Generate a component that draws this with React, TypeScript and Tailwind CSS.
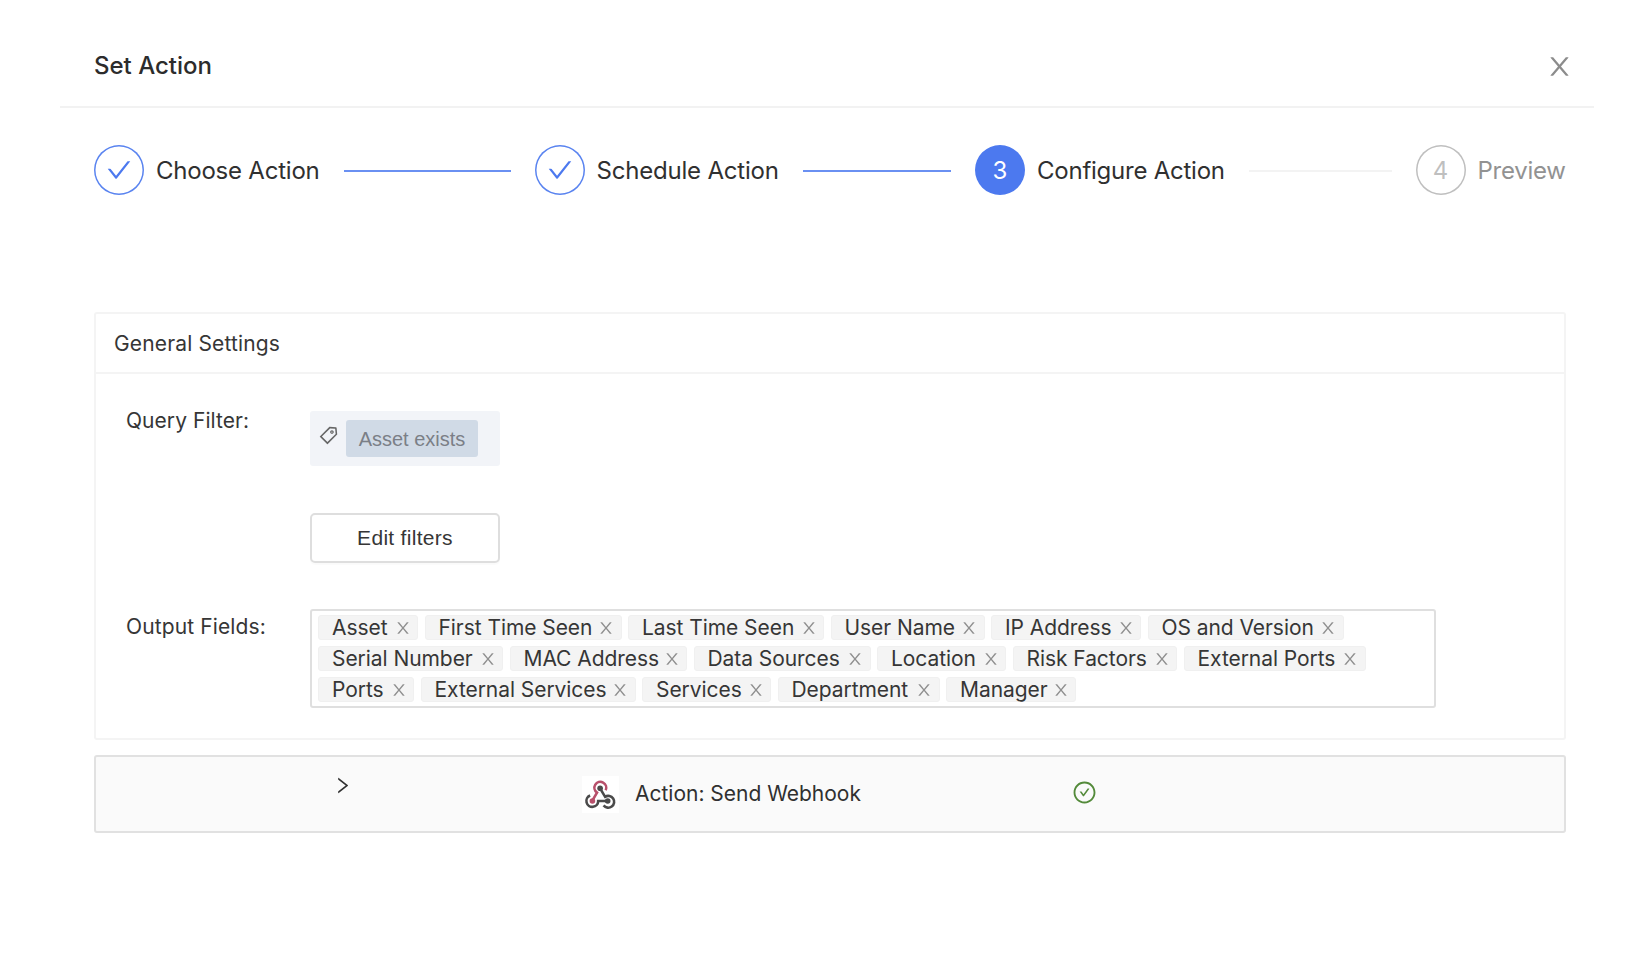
import { AiOutlineCheck, AiOutlineCheckCircle, AiOutlineTag } from "react-icons/ai";

type Step = {
  title: string;
  state: "done" | "active" | "waiting";
  width: string;
  tracking: string;
};

const steps: Step[] = [
  { title: "Choose Action", state: "done", width: "w-[440.5px]", tracking: "tracking-[-0.22px]" },
  { title: "Schedule Action", state: "done", width: "w-[440.5px]", tracking: "tracking-[-0.2px]" },
  { title: "Configure Action", state: "active", width: "w-[440.5px]", tracking: "tracking-[-0.24px]" },
  { title: "Preview", state: "waiting", width: "w-[152px]", tracking: "tracking-[-0.25px]" },
];

type Field = { name: string; width: string };

const fieldRows: Field[][] = [
  [
    { name: "Asset", width: "w-[100px]" },
    { name: "First Time Seen", width: "w-[197px]" },
    { name: "Last Time Seen", width: "w-[196px]" },
    { name: "User Name", width: "w-[154px]" },
    { name: "IP Address", width: "w-[150px]" },
    { name: "OS and Version", width: "w-[196px]" },
  ],
  [
    { name: "Serial Number", width: "w-[185px]" },
    { name: "MAC Address", width: "w-[177.5px]" },
    { name: "Data Sources", width: "w-[177px]" },
    { name: "Location", width: "w-[129px]" },
    { name: "Risk Factors", width: "w-[164.5px]" },
    { name: "External Ports", width: "w-[182px]" },
  ],
  [
    { name: "Ports", width: "w-[96px]" },
    { name: "External Services", width: "w-[215px]" },
    { name: "Services", width: "w-[129px]" },
    { name: "Department", width: "w-[162px]" },
    { name: "Manager", width: "w-[130px]" },
  ],
];

function CloseIcon({ className }: { className: string }) {
  return (
    <svg viewBox="0 0 1024 1024" fill="currentColor" className={className}>
      <path d="M563.8 512l262.5-312.9c4.4-5.2.7-13.1-6.1-13.1h-79.8c-4.7 0-9.2 2.1-12.3 5.7L511.6 449.8 295.1 191.7c-3-3.6-7.5-5.7-12.3-5.7H203c-6.8 0-10.5 7.9-6.1 13.1L459.4 512 196.9 824.9A7.95 7.95 0 0 0 203 838h79.8c4.7 0 9.2-2.1 12.3-5.7l216.5-258.1 216.5 258.1c3 3.6 7.5 5.7 12.3 5.7h79.8c6.8 0 10.5-7.9 6.1-13.1L563.8 512z" />
    </svg>
  );
}

function ChevronRightIcon({ className }: { className: string }) {
  return (
    <svg viewBox="0 0 1024 1024" fill="currentColor" className={className}>
      <path d="M765.7 486.8L314.9 134.7A7.97 7.97 0 0 0 302 141v77.3c0 4.9 2.3 9.6 6.1 12.6l360 281.1-360 281.1c-3.9 3-6.1 7.7-6.1 12.6V883c0 6.7 7.7 10.4 12.9 6.3l450.8-352.1a31.96 31.96 0 0 0 0-50.4z" />
    </svg>
  );
}

function WebhookLogo() {
  return (
    <svg viewBox="0 0 37 37" className="size-[37px] shrink-0 bg-white" fill="none" strokeWidth="2.6">
      <path d="M23.7 14.2A5.9 5.9 0 1 0 15 16.6L10.5 24.3" stroke="#b8506b" />
      <path d="M18.1 12.3 23.1 20.8A5.9 5.9 0 1 1 21.6 29.4" stroke="#4a4a4a" />
      <path d="M25.7 25H16.2A5.9 5.9 0 1 1 8.1 19.5" stroke="#4a4a4a" />
      <circle cx="18.1" cy="12.3" r="2.8" fill="#4a4a4a" />
      <circle cx="10.4" cy="25" r="2.8" fill="#b8506b" />
      <circle cx="25.7" cy="25" r="2.8" fill="#4a4a4a" />
    </svg>
  );
}

function StepMarker({ state, index }: { state: Step["state"]; index: number }) {
  if (state === "done") {
    return (
      <span className="flex size-[50px] shrink-0 items-center justify-center rounded-full text-[#4c79ef] shadow-[inset_0_0_0_1.5px_#5a84f0]">
        <AiOutlineCheck size={28} />
      </span>
    );
  }
  if (state === "active") {
    return (
      <span className="flex size-[50px] shrink-0 items-center justify-center rounded-full bg-[#4c79ef] pt-0.5 text-2xl text-white">
        {index}
      </span>
    );
  }
  return (
    <span className="flex size-[50px] shrink-0 items-center justify-center rounded-full pt-0.5 text-2xl text-[#bfbfbf] shadow-[inset_0_0_0_1.5px_#bfbfbf]">
      {index}
    </span>
  );
}

function Steps() {
  return (
    <ol className="flex pt-[37px] pl-[34px]">
      {steps.map((step, i) => (
        <li key={step.title} className={`flex shrink-0 items-center ${step.width}`}>
          <StepMarker state={step.state} index={i + 1} />
          <span
            className={`ml-3 pt-0.5 text-2xl leading-[48px] whitespace-nowrap ${step.tracking} ${
              step.state === "waiting" ? "text-[#929292]" : "text-[#303030]"
            }`}
          >
            {step.title}
          </span>
          {i < steps.length - 1 && (
            <span
              className={`mt-px mr-6 ml-6 h-0.5 flex-1 ${
                step.state === "done" ? "bg-[#6a90f2]" : "bg-[#f3f3f3]"
              }`}
            />
          )}
        </li>
      ))}
    </ol>
  );
}

function GeneralSettings() {
  return (
    <section className="mt-[117px] h-[428px] rounded-[3px] border-2 border-[#f4f4f4] text-[21px] text-[#363636]">
      <h2 className="h-[60px] border-b-2 border-[#f4f4f4] pl-[18px] leading-[60px] tracking-[0.15px]">
        General Settings
      </h2>
      <div className="grid grid-cols-[184px_1fr] pt-[37px] pl-[30px]">
        <span className="h-8 leading-[20px] tracking-[0.05px]">Query Filter:</span>
        <div className="flex h-[55px] w-[190px] items-start rounded-[3px] bg-[#f2f4f8] pt-[9px] pl-2 font-['Liberation_Sans',sans-serif] text-xl text-[#7b7f87]">
          <AiOutlineTag size={21} className="mt-[5px] text-[#666]" />
          <span className="ml-[7px] flex h-[37px] w-[132px] items-center justify-center rounded-[3px] bg-[#d0dae6] pt-px">
            Asset exists
          </span>
        </div>
        <button className="col-start-2 mt-[47px] h-[50px] w-[190px] rounded-[5px] border-2 border-[#dedede] bg-white font-['Liberation_Sans',sans-serif] tracking-[0.3px] shadow-[0_2px_1px_#00000005]">
          Edit filters
        </button>
        <span className="mt-[46px] leading-[35px] tracking-[0.12px]">Output Fields:</span>
        <div className="mt-[46px] flex h-[99px] w-[1126px] flex-col gap-1.5 rounded-[3px] border-2 border-[#dfdfdf] pt-1 pl-[6px]">
          {fieldRows.map((row) => (
            <div key={row[0].name} className="flex gap-[6.5px]">
              {row.map((field) => (
                <span
                  key={field.name}
                  className={`flex h-[25px] shrink-0 items-center justify-between rounded-[3px] border border-[#f0f0f0] bg-[#f4f4f4] pr-[5.5px] pl-[13px] leading-[25px] tracking-[-0.06px] whitespace-nowrap ${field.width}`}
                >
                  {field.name}
                  <CloseIcon className="mt-px size-[18px] shrink-0 text-[#8f8f8f]" />
                </span>
              ))}
            </div>
          ))}
        </div>
      </div>
    </section>
  );
}

function ActionRow() {
  return (
    <section className="mt-[15px] flex h-[78px] items-center rounded-[3px] border-2 border-[#e1e1e1] bg-[#fafafa] text-[21px] text-[#303030]">
      <ChevronRightIcon className="mb-[18px] ml-[236px] size-[21px]" />
      <div className="ml-[229px] flex w-[463px] items-center">
        <WebhookLogo />
        <span className="ml-4 tracking-[-0.01px]">Action: Send Webhook</span>
      </div>
      <AiOutlineCheckCircle size={25} className="mb-1 ml-[27px] text-[#538a3a]" />
    </section>
  );
}

export default function App() {
  return (
    <main className="h-[976px] w-[1640px] overflow-hidden bg-white pr-[46px] pl-[60px] font-[Inter,sans-serif]">
      <header className="flex h-[108px] items-center justify-between border-b-2 border-[#f2f2f2] pt-[26px] pr-[20px] pl-[34px]">
        <h1 className="text-2xl font-medium text-[#2c2c2c]">Set Action</h1>
        <CloseIcon className="size-[29px] text-[#8c8c8c]" />
      </header>
      <Steps />
      <div className="mr-[28px] ml-[34px]">
        <GeneralSettings />
        <ActionRow />
      </div>
    </main>
  );
}
